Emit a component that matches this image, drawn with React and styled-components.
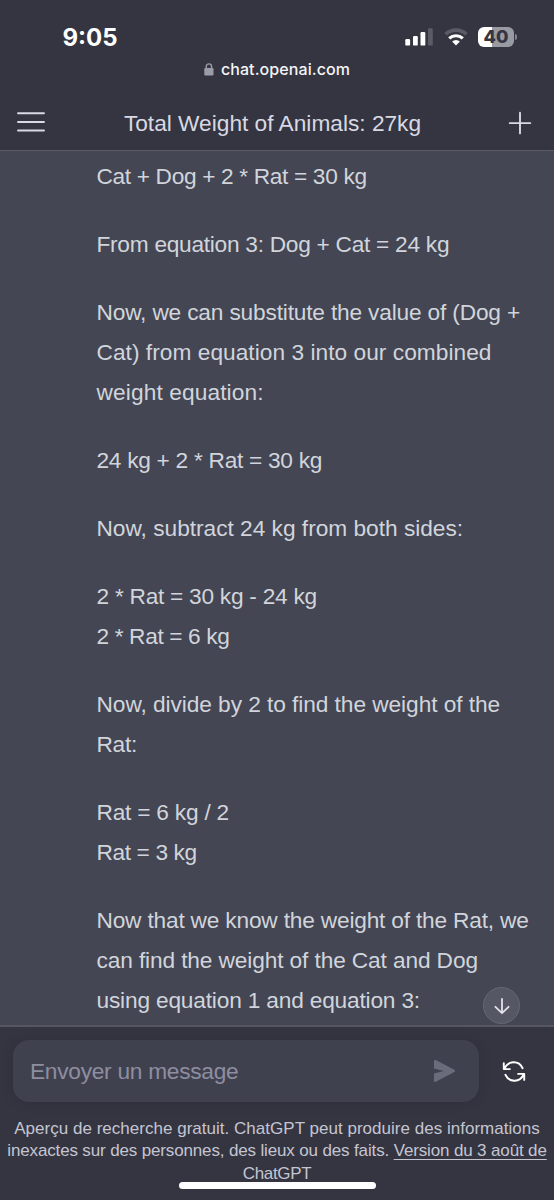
import styled, { createGlobalStyle } from 'styled-components';

const GlobalStyle = createGlobalStyle`
  * {
    box-sizing: border-box;
  }

  body {
    margin: 0;
    background: #343541;
    font-family: 'Liberation Sans', Arial, sans-serif;
  }
`;

// each line carries its own tracking, [text, letter-spacing]
const answer = [
  [['Cat + Dog + 2 * Rat = 30 kg', -0.34]],
  [['From equation 3: Dog + Cat = 24 kg', -0.27]],
  [
    ['Now, we can substitute the value of (Dog +', -0.17],
    ['Cat) from equation 3 into our combined', 0.04],
    ['weight equation:', 0.12],
  ],
  [['24 kg + 2 * Rat = 30 kg', -0.28]],
  [['Now, subtract 24 kg from both sides:', -0.01]],
  [
    ['2 * Rat = 30 kg - 24 kg', -0.26],
    ['2 * Rat = 6 kg', -0.36],
  ],
  [
    ['Now, divide by 2 to find the weight of the', -0.06],
    ['Rat:', -0.3],
  ],
  [
    ['Rat = 6 kg / 2', -0.22],
    ['Rat = 3 kg', -0.38],
  ],
  [
    ['Now that we know the weight of the Rat, we', -0.19],
    ['can find the weight of the Cat and Dog', -0.12],
    ['using equation 1 and equation 3:', -0.18],
  ],
];

function StatusBar() {
  return (
    <StatusRow>
      <Clock>9:05</Clock>
      <StatusIcons>
        <svg width="29" height="18" viewBox="0 0 29 18">
          <rect x="0.3" y="11" width="4.8" height="6.6" rx="1.2" fill="#fff" />
          <rect x="8" y="8" width="4.8" height="9.6" rx="1.2" fill="#fff" />
          <rect x="15.5" y="4" width="4.8" height="13.6" rx="1.2" fill="#fff" />
          <rect x="23" y="0.3" width="4.8" height="17.3" rx="1.2" fill="#5b5b66" />
        </svg>
        <svg width="24" height="18" viewBox="0 0 24 18">
          <path d="M1.6 6.2a15.2 15.2 0 0 1 20.8 0" fill="none" stroke="#5b5b66" strokeWidth="3.6" />
          <path d="M5.2 10.4a10 10 0 0 1 13.6 0" fill="none" stroke="#fff" strokeWidth="3.2" />
          <path d="M12 17.4l-3.9-3.8a5.7 5.7 0 0 1 7.8 0z" fill="#fff" />
        </svg>
        <Battery>
          <Level>40</Level>
          <Nub />
        </Battery>
      </StatusIcons>
    </StatusRow>
  );
}

function App() {
  return (
    <>
      <GlobalStyle />
      <Screen>
        <Header>
          <StatusBar />
          <UrlRow>
            <svg width="10" height="13" viewBox="0 0 10 13">
              <rect x="0.3" y="5" width="9.2" height="7.5" rx="1.2" fill="#9c9ca8" />
              <path d="M2.2 6V3.6a2.7 2.7 0 0 1 5.4 0V6" fill="none" stroke="#9c9ca8" strokeWidth="1.4" />
            </svg>
            chat.openai.com
          </UrlRow>
          <TitleRow>
            <MenuButton aria-label="Menu">
              <svg width="28" height="20" viewBox="0 0 28 20" stroke="#d9d9e3" strokeWidth="1.9" strokeLinecap="round">
                <path d="M1 1.2h26M1 10h26M1 18.5h26" />
              </svg>
            </MenuButton>
            <Title>Total Weight of Animals: 27kg</Title>
            <IconButton aria-label="Plus">
              <svg width="24" height="24" viewBox="0 0 24 24" stroke="#d9d9e3" strokeWidth="1.9" strokeLinecap="round">
                <path d="M12 1.8v20.6M1.7 12.1h20.6" />
              </svg>
            </IconButton>
          </TitleRow>
        </Header>

        <Conversation>
          {answer.map((lines, i) => (
            <Paragraph key={i}>
              {lines.map(([text, tracking]) => (
                <Line key={text} $tracking={tracking}>
                  {text}
                </Line>
              ))}
            </Paragraph>
          ))}
          <ScrollButton aria-label="Bas">
            <svg width="18" height="18" viewBox="0 0 18 18" fill="none" stroke="#e1e1e9" strokeWidth="1.8" strokeLinecap="round" strokeLinejoin="round">
              <path d="M9 2v14M2.4 9.8L9 16.2l6.6-6.4" />
            </svg>
          </ScrollButton>
        </Conversation>

        <Composer>
          <InputRow>
            <InputBox>
              <span>Envoyer un message</span>
              <svg width="23" height="24" viewBox="0 0 23 24" fill="#6b6c7b">
                <path d="M1 2.2C1 1.2 1.9.7 2.8 1.1L21.3 10.8c1 .5 1 1.7 0 2.2L2.8 22.8c-.9.4-1.8-.1-1.8-1.1v-7.3l9.8-2.4L1 9.5z" />
              </svg>
            </InputBox>
            <IconButton aria-label="Recommencer">
              <svg width="24" height="21" viewBox="0 0 24 22" fill="none" stroke="#fff" strokeWidth="2" strokeLinecap="round" strokeLinejoin="round">
                <path d="M1.3 2.2v6.3h6.4M1.8 8.3C5.5-.6 17-1 21 7.6" />
                <path d="M22.7 19.8v-6.3h-6.4M22.2 13.7C18.5 22.6 7 23 3 14.4" />
              </svg>
            </IconButton>
          </InputRow>
          <Notice>
            <NoticeLine $tracking={0.02}>
              Aperçu de recherche gratuit. ChatGPT peut produire des informations
            </NoticeLine>
            <NoticeLine $tracking={-0.145}>
              inexactes sur des personnes, des lieux ou des faits. <u>Version du 3 août de</u>
            </NoticeLine>
            <NoticeLine $tracking={-0.35}>
              <u>ChatGPT</u>
            </NoticeLine>
          </Notice>
          <HomeIndicator />
        </Composer>
      </Screen>
    </>
  );
}

const Screen = styled.div`
  width: 554px;
  height: 1200px;
  display: flex;
  flex-direction: column;
  overflow: hidden;
  background: #343541;
`;

const Header = styled.header`
  height: 151px;
  flex: none;
  border-bottom: 1px solid #5a5b69;
`;

const StatusRow = styled.div`
  height: 56px;
  padding: 18px 37px 0 62.5px;
  display: flex;
  justify-content: space-between;
`;

const Clock = styled.div`
  height: 39px;
  line-height: 39px;
  color: #fff;
  font-family: Inter, sans-serif;
  font-size: 24px;
  font-weight: 700;
`;

const StatusIcons = styled.div`
  height: 37px;
  display: flex;
  align-items: center;
  gap: 10px;
`;

const Battery = styled.div`
  display: flex;
  align-items: center;
  gap: 1px;
`;

const Level = styled.div`
  width: 36px;
  height: 20px;
  border-radius: 6px;
  background: linear-gradient(90deg, #fff 40%, #9a9aa2 40%);
  color: #343541;
  font-family: Inter, sans-serif;
  font-size: 18px;
  font-weight: 800;
  line-height: 20px;
  text-align: center;
`;

const Nub = styled.div`
  width: 2px;
  height: 6px;
  border-radius: 0 2px 2px 0;
  background: #85858f;
`;

const UrlRow = styled.div`
  height: 26px;
  display: flex;
  align-items: center;
  justify-content: center;
  gap: 7px;
  color: #f4f4f6;
  font-family: Inter, sans-serif;
  font-size: 16px;
  letter-spacing: 0.08px;
  font-weight: 500;
`;

const TitleRow = styled.div`
  height: 68px;
  padding: 14px 22px 0 17px;
  display: flex;
  align-items: center;
  justify-content: space-between;
`;

const IconButton = styled.button`
  padding: 0;
  border: none;
  background: none;
  display: flex;
`;

const MenuButton = styled(IconButton)`
  padding-bottom: 3px;
`;

const Title = styled.h1`
  margin: 0 8px 0 0;
  color: #d9d9e3;
  font-size: 22.7px;
  font-weight: 400;
  line-height: 34px;
`;

const Conversation = styled.main`
  position: relative;
  flex: none;
  height: 874px;
  padding: 5.6px 0 0 96.5px;
  overflow: hidden;
  display: flex;
  flex-direction: column;
  gap: 28.4px;
  background: #444654;
`;

const Paragraph = styled.p`
  margin: 0;
  color: #d1d5db;
  font-size: 22.7px;
  line-height: 39.8px;
`;

const Line = styled.span`
  display: block;
  white-space: pre;
  letter-spacing: ${({ $tracking }) => $tracking}px;
`;

const ScrollButton = styled.button`
  position: absolute;
  right: 34px;
  bottom: 1px;
  width: 37px;
  height: 37px;
  padding: 0;
  border: 1.5px solid #676876;
  border-radius: 50%;
  background: #565764;
  display: flex;
  align-items: center;
  justify-content: center;
`;

const Composer = styled.footer`
  flex: 1;
  border-top: 2px solid #565663;
  padding-top: 13px;
  display: flex;
  flex-direction: column;
  align-items: center;
`;

const InputRow = styled.div`
  width: 100%;
  padding: 0 28px 0 13px;
  display: flex;
  align-items: center;
  justify-content: space-between;
`;

const InputBox = styled.div`
  width: 466px;
  height: 62px;
  padding: 0 23px 0 17px;
  border-radius: 16px;
  background: #40414f;
  box-shadow: 0 0 14px rgba(0, 0, 0, 0.1);
  color: #8e8ea0;
  font-size: 22.7px;
  letter-spacing: -0.26px;
  display: flex;
  align-items: center;
  justify-content: space-between;
`;

const Notice = styled.div`
  margin-top: 15.6px;
  color: #c5c5d2;
  font-size: 17px;
  line-height: 22.8px;
  text-align: center;

  u {
    text-decoration-thickness: 1px;
    text-underline-offset: 3px;
  }
`;

const NoticeLine = styled.div`
  white-space: nowrap;
  letter-spacing: ${({ $tracking }) => $tracking}px;
`;

const HomeIndicator = styled.div`
  position: relative;
  width: 197px;
  height: 7px;
  margin-top: -4px;
  border-radius: 4px;
  background: #fff;
`;

export default App;
